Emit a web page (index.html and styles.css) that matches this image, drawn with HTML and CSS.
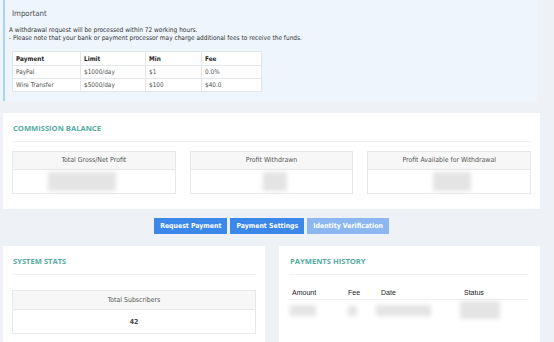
FILE: index.html
```html
<!DOCTYPE html>
<html>
<head>
<meta charset="utf-8">
<link rel="stylesheet" href="styles.css">
</head>
<body>
<div class="alert">
  <div class="alert-title">Important</div>
  <p class="alert-text">A withdrawal request will be processed within 72 working hours.<br>- Please note that your bank or payment processor may charge additional fees to receive the funds.</p>
  <table class="fees">
    <tr><th>Payment</th><th>Limit</th><th>Min</th><th>Fee</th></tr>
    <tr><td>PayPal</td><td>$1000/day</td><td>$1</td><td>0.0%</td></tr>
    <tr><td>Wire Transfer</td><td>$5000/day</td><td>$100</td><td>$40.0</td></tr>
  </table>
</div>

<section class="panel balance">
  <h2 class="panel-title">COMMISSION BALANCE</h2>
  <div class="stat-row">
    <div class="stat-box"><div class="stat-head">Total Gross/Net Profit</div><div class="stat-body"><span class="blur b1"></span></div></div>
    <div class="stat-box"><div class="stat-head">Profit Withdrawn</div><div class="stat-body"><span class="blur b2"></span></div></div>
    <div class="stat-box"><div class="stat-head">Profit Available for Withdrawal</div><div class="stat-body"><span class="blur b3"></span></div></div>
  </div>
</section>

<div class="actions">
  <button class="btn">Request Payment</button>
  <button class="btn">Payment Settings</button>
  <button class="btn btn-light">Identity Verification</button>
</div>

<div class="bottom">
  <section class="panel half">
    <h2 class="panel-title">SYSTEM STATS</h2>
    <div class="stat-box subs"><div class="stat-head">Total Subscribers</div><div class="stat-body strong">42</div></div>
  </section>
  <section class="panel half history">
    <h2 class="panel-title">PAYMENTS HISTORY</h2>
    <div class="hist-head"><span class="c-amt">Amount</span><span class="c-fee">Fee</span><span class="c-date">Date</span><span class="c-status">Status</span></div>
    <div class="hist-row">
      <span class="c-amt"><span class="blur h1"></span></span><span class="c-fee"><span class="blur h2"></span></span><span class="c-date"><span class="blur h3"></span></span><span class="c-status"><span class="blur h4"></span></span>
    </div>
  </section>
</div>
</body>
</html>
```

FILE: styles.css
```css
* { box-sizing: border-box; }
html, body { margin: 0; padding: 0; }
body {
  width: 554px;
  height: 342px;
  overflow: hidden;
  background: #eef1f6;
  font-family: "DejaVu Sans Condensed", "DejaVu Sans", sans-serif;
  color: #444;
}
.alert {
  width: 537px;
  height: 101px;
  padding: 9px 0 0 9px;
  background: linear-gradient(to right, #eef5fc 3px, #a9d5f2 3px, #a9d5f2 5px, #eef5fc 5px);
}
.alert-title { font-size: 7.8px; line-height: 10px; color: #4a4a4a; margin-left: 3px; }
.alert-text { margin: 7px 0 0 0; font-size: 6.5px; line-height: 8px; color: #333; }
.fees {
  margin: 9px 0 0 3px;
  border-collapse: collapse;
  width: 250px;
  background: #fff;
  font-size: 6.4px;
}
.fees th, .fees td {
  border: 1px solid #e4e7ea;
  text-align: left;
  padding: 0 3px;
  height: 13px;
  color: #555;
}
.fees th { color: #222; font-weight: bold; height: 14px; }
.fees th:nth-child(1) { width: 68px; }
.fees th:nth-child(2) { width: 65px; }
.fees th:nth-child(3) { width: 56px; }

.panel { background: #fff; }
.balance {
  margin: 12px 0 0 3px;
  width: 537px;
  padding: 10px 9px 15px 9px;
}
.panel-title {
  margin: 0;
  font-family: "Open Sans", "DejaVu Sans", sans-serif;
  font-size: 7.6px;
  line-height: 10px;
  font-weight: bold;
  color: #55ab9f;
  padding: 0 0 8px 1px;
  border-bottom: 1px solid #f0f2f3;
}
.stat-row { display: flex; gap: 14px; margin-top: 9px; }
.stat-box { flex: 1; border: 1px solid #e6e8ea; }
.stat-head {
  height: 18px;
  line-height: 17px;
  background: #f7f7f7;
  border-bottom: 1px solid #e6e8ea;
  text-align: center;
  font-size: 6.9px;
  color: #555;
}
.stat-body {
  height: 23px;
  display: flex;
  align-items: center;
  justify-content: center;
  font-size: 6.9px;
}
.stat-body.strong { font-weight: bold; color: #444; }
.blur { display: inline-block; background: #e4e4e4; filter: blur(2.2px); }
.b1 { width: 68px; height: 19px; margin-left: -24px; }
.b2 { width: 24px; height: 19px; margin-left: 6px; }
.b3 { width: 38px; height: 19px; margin-left: 6px; }

.actions {
  width: 537px;
  margin: 9px 0 0 3px;
  display: flex;
  justify-content: center;
  gap: 3px;
}
.btn {
  font-family: "DejaVu Sans Condensed", "DejaVu Sans", sans-serif;
  border: 0;
  margin: 0;
  height: 16px;
  padding: 0 6px;
  background: #3b87ea;
  color: #fff;
  font-size: 6.9px;
  font-weight: bold;
}
.btn-light { background: #8cb7f1; }

.bottom {
  display: flex;
  gap: 14px;
  margin: 12px 0 0 3px;
  width: 537px;
}
.half { height: 100px; padding: 10px 9px 0 9px; }
.half:first-child { width: 262px; }
.half.history { width: 261px; padding-left: 10px; padding-right: 12px; }
.subs { margin-top: 15px; }
.subs .stat-head { height: 19px; line-height: 18px; }
.subs .stat-body { height: 23px; }

.hist-head {
  display: flex;
  font-family: "Liberation Sans", Arial, sans-serif;
  font-size: 7px;
  color: #222;
  margin-top: 13px;
  height: 12px;
  line-height: 10px;
  border-bottom: 1px solid #eceef0;
}
.hist-row { display: flex; height: 22px; padding-top: 1px; }
.c-amt { width: 59px; padding-left: 3px; }
.c-fee { width: 33px; }
.c-date { width: 83px; }
.c-status { width: 60px; }
.h1 { width: 26px; height: 11px; margin-left: -2px; }
.h2 { width: 9px; height: 10px; }
.h3 { width: 55px; height: 11px; margin-left: -5px; }
.h4 { width: 40px; height: 18px; margin-left: -4px; }
```
